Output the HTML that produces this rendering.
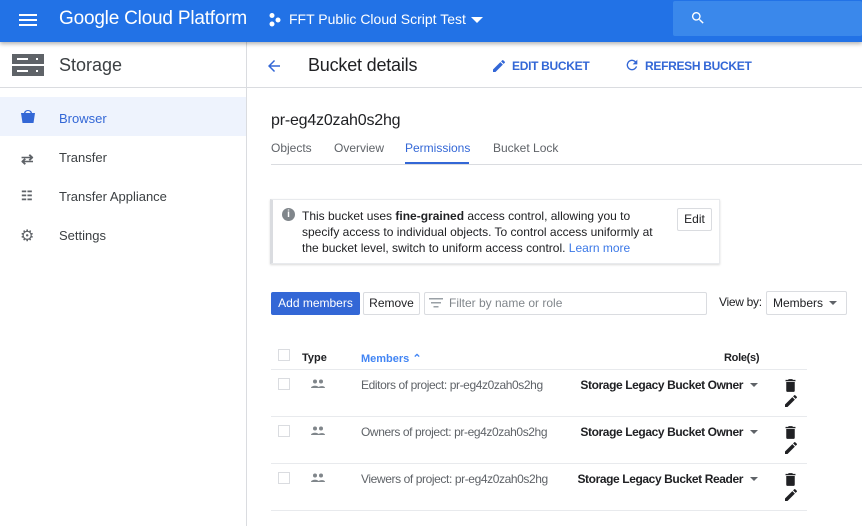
<!DOCTYPE html>
<html><head><meta charset="utf-8"><style>
*{margin:0;padding:0;box-sizing:border-box}
body{width:862px;height:526px;overflow:hidden;background:#fff;font-family:"Liberation Sans",sans-serif;position:relative;color:#202124}
.a{position:absolute;white-space:nowrap}
.t13{font-size:13px}
.r{letter-spacing:-0.4px}
</style></head><body>
<div class="a" style="left:0;top:0;width:862px;height:42px;background:#2272e6;box-shadow:0 2px 4px rgba(0,0,0,.3);z-index:2">
  <div class="a" style="left:19px;top:14px;width:18px;height:2px;background:#fff;box-shadow:0 5px 0 #fff,0 10px 0 #fff"></div>
  <div class="a" style="left:59px;top:8px;font-size:19px;color:#fff;letter-spacing:-0.2px">Google Cloud Platform</div>
  <svg class="a" style="left:268px;top:12px" width="16" height="16" viewBox="0 0 16 16"><circle cx="4" cy="3.5" r="2.5" fill="#fff"/><circle cx="4" cy="12" r="2.5" fill="#fff"/><circle cx="10" cy="8" r="2.5" fill="#fff"/></svg>
  <div class="a" style="left:289px;top:11px;font-size:14px;color:#fff">FFT Public Cloud Script Test</div>
  <div class="a" style="left:471px;top:17px;border-left:6px solid transparent;border-right:6px solid transparent;border-top:6px solid #fff"></div>
  <div class="a" style="left:673px;top:1px;width:189px;height:35px;background:#3a88eb;border-radius:2px"></div>
  <svg class="a" style="left:690px;top:10px" width="16" height="16" viewBox="0 0 24 24"><path fill="#fff" d="M15.5 14h-.8l-.3-.3A6.5 6.5 0 1 0 9.5 16a6.5 6.5 0 0 0 4.2-1.6l.3.3v.8l5 5 1.5-1.5-5-5zm-6 0a4.5 4.5 0 1 1 0-9 4.5 4.5 0 0 1 0 9z"/></svg>
</div>
<div class="a" style="left:246px;top:42px;width:1px;height:484px;background:#dadce0"></div>
<div class="a" style="left:0;top:87px;width:862px;height:1px;background:#dadce0"></div>
<div class="a" style="left:12px;top:54px;width:32px;height:10px;background:#5f6368"></div>
<div class="a" style="left:12px;top:66px;width:32px;height:10px;background:#5f6368"></div>
<div class="a" style="left:17px;top:58px;width:11px;height:2px;background:#fff"></div>
<div class="a" style="left:17px;top:70px;width:11px;height:2px;background:#fff"></div>
<div class="a" style="left:36px;top:58px;width:2px;height:2px;background:#fff"></div>
<div class="a" style="left:36px;top:70px;width:2px;height:2px;background:#fff"></div>
<div class="a" style="left:59px;top:55px;font-size:18px;color:#3c4043">Storage</div>
<div class="a" style="left:0;top:97px;width:246px;height:39px;background:#eef3fd"></div>
<svg class="a" style="left:20px;top:110px" width="16" height="14" viewBox="0 0 16 14"><path fill="#3367d6" d="M1 3h14l-1.5 10h-11z M4 3a4 3 0 0 1 8 0h-1.5a2.5 2 0 0 0-5 0z"/></svg>
<div class="a t13" style="left:59px;top:111px;color:#3367d6">Browser</div>
<div class="a" style="left:21px;top:150px;font-size:15px;color:#5f6368;font-weight:bold">⇄</div>
<div class="a t13" style="left:59px;top:150px;color:#3c4043">Transfer</div>
<div class="a" style="left:21px;top:188px;font-size:13px;color:#5f6368;font-weight:bold">☷</div>
<div class="a t13" style="left:59px;top:189px;color:#3c4043">Transfer Appliance</div>
<div class="a" style="left:20px;top:226px;font-size:16px;color:#5f6368">⚙</div>
<div class="a t13" style="left:59px;top:228px;color:#3c4043">Settings</div>
<svg class="a" style="left:265px;top:57px" width="18" height="18" viewBox="0 0 24 24"><path fill="#3367d6" d="M20 11H7.8l5.6-5.6L12 4l-8 8 8 8 1.4-1.4L7.8 13H20z"/></svg>
<div class="a" style="left:308px;top:55px;font-size:18px;color:#202124;letter-spacing:-0.2px">Bucket details</div>
<svg class="a" style="left:491px;top:58px" width="16" height="16" viewBox="0 0 24 24"><path fill="#3367d6" d="M3 17.25V21h3.75L17.8 9.94l-3.75-3.75zM20.7 7.04a1 1 0 0 0 0-1.41l-2.34-2.34a1 1 0 0 0-1.41 0l-1.83 1.83 3.75 3.75z"/></svg>
<div class="a" style="left:512px;top:59px;font-size:12px;font-weight:bold;color:#3367d6;letter-spacing:-0.3px">EDIT BUCKET</div>
<svg class="a" style="left:624px;top:57px" width="16" height="16" viewBox="0 0 24 24"><path fill="#3367d6" d="M17.65 6.35A8 8 0 1 0 19.73 14h-2.08A6 6 0 1 1 12 6c1.66 0 3.14.69 4.22 1.78L13 11h7V4z"/></svg>
<div class="a" style="left:645px;top:59px;font-size:12px;font-weight:bold;color:#3367d6;letter-spacing:-0.3px">REFRESH BUCKET</div>
<div class="a" style="left:271px;top:112px;font-size:16px;color:#202124;letter-spacing:-0.2px">pr-eg4z0zah0s2hg</div>
<div class="a" style="left:271px;top:164px;width:591px;height:1px;background:#dadce0"></div>
<div class="a" style="left:271px;top:141px;font-size:12px;color:#5f6368">Objects</div>
<div class="a" style="left:334px;top:141px;font-size:12px;color:#5f6368">Overview</div>
<div class="a" style="left:405px;top:141px;font-size:12px;color:#3367d6">Permissions</div>
<div class="a" style="left:405px;top:162px;width:64px;height:2px;background:#3367d6"></div>
<div class="a" style="left:493px;top:141px;font-size:12px;color:#5f6368">Bucket Lock</div>
<div class="a" style="left:270px;top:199px;width:450px;height:65px;border:1px solid #e8eaed;border-left:3px solid #dadce0;box-shadow:0 1px 2px rgba(0,0,0,.15);background:#fff"></div>
<div class="a" style="left:282px;top:208px;width:13px;height:13px;border-radius:50%;background:#80868b;color:#fff;font-size:10px;font-weight:bold;text-align:center;line-height:13px">i</div>
<div class="a" style="left:302px;top:208px;font-size:12px;line-height:16px;color:#202124">This bucket uses <b>fine-grained</b> access control, allowing you to<br>specify access to individual objects. To control access uniformly at<br>the bucket level, switch to uniform access control. <span style="color:#3b78e7">Learn more</span></div>
<div class="a" style="left:677px;top:208px;width:35px;height:23px;border:1px solid #dadce0;border-radius:2px;font-size:12px;text-align:center;line-height:21px">Edit</div>
<div class="a" style="left:271px;top:292px;width:89px;height:23px;background:#3367d6;border-radius:2px;color:#fff;font-size:12px;text-align:center;line-height:23px">Add members</div>
<div class="a" style="left:363px;top:292px;width:57px;height:23px;border:1px solid #dadce0;border-radius:2px;font-size:12px;text-align:center;line-height:21px">Remove</div>
<div class="a" style="left:424px;top:292px;width:283px;height:23px;border:1px solid #dadce0;border-radius:2px"></div>
<svg class="a" style="left:429px;top:297px" width="14" height="12" viewBox="0 0 14 12"><path fill="#9aa0a6" d="M0 1h14v1.5H0zM2 5h10v1.5H2zM4.5 9h5v1.5h-5z"/></svg>
<div class="a" style="left:449px;top:296px;font-size:12px;color:#80868b">Filter by name or role</div>
<div class="a" style="left:719px;top:295px;font-size:12px;color:#202124;letter-spacing:-0.3px">View by:</div>
<div class="a" style="left:766px;top:291px;width:81px;height:24px;border:1px solid #dadce0;border-radius:2px"></div>
<div class="a" style="left:773px;top:296px;font-size:12px">Members</div>
<div class="a" style="left:829px;top:301px;border-left:4px solid transparent;border-right:4px solid transparent;border-top:4px solid #5f6368"></div>
<div class="a" style="left:278px;top:349px;width:12px;height:12px;border:1px solid #dadce0"></div>
<div class="a" style="left:302px;top:352px;font-size:11px;font-weight:bold">Type</div>
<div class="a" style="left:361px;top:352px;font-size:11px;font-weight:bold;color:#4285f4">Members ⌃</div>
<div class="a" style="left:724px;top:352px;font-size:11px;font-weight:bold;letter-spacing:-0.3px">Role(s)</div>
<div class="a" style="left:271px;top:369px;width:536px;height:1px;background:#e8eaed"></div>
<div class="a" style="left:271px;top:416px;width:536px;height:1px;background:#e8eaed"></div>
<div class="a" style="left:271px;top:463px;width:536px;height:1px;background:#e8eaed"></div>
<div class="a" style="left:271px;top:510px;width:536px;height:1px;background:#e8eaed"></div>
<div class="a" style="left:278px;top:378px;width:12px;height:12px;border:1px solid #dadce0"></div>
<div class="a" style="left:278px;top:425px;width:12px;height:12px;border:1px solid #dadce0"></div>
<div class="a" style="left:278px;top:472px;width:12px;height:12px;border:1px solid #dadce0"></div>
<svg class="a" style="left:311px;top:379px" width="14" height="10" viewBox="0 0 14 10"><circle cx="4" cy="2.5" r="2" fill="#80868b"/><circle cx="10" cy="2.5" r="2" fill="#80868b"/><path fill="#80868b" d="M0 9c0-3 8-3 8 0zM7 9c0-2 7-3 7 0z"/></svg>
<svg class="a" style="left:311px;top:426px" width="14" height="10" viewBox="0 0 14 10"><circle cx="4" cy="2.5" r="2" fill="#80868b"/><circle cx="10" cy="2.5" r="2" fill="#80868b"/><path fill="#80868b" d="M0 9c0-3 8-3 8 0zM7 9c0-2 7-3 7 0z"/></svg>
<svg class="a" style="left:311px;top:473px" width="14" height="10" viewBox="0 0 14 10"><circle cx="4" cy="2.5" r="2" fill="#80868b"/><circle cx="10" cy="2.5" r="2" fill="#80868b"/><path fill="#80868b" d="M0 9c0-3 8-3 8 0zM7 9c0-2 7-3 7 0z"/></svg>
<div class="a r" style="left:361px;top:378px;font-size:12px;color:#5f6368">Editors of project: pr-eg4z0zah0s2hg</div>
<div class="a r" style="left:361px;top:425px;font-size:12px;color:#5f6368">Owners of project: pr-eg4z0zah0s2hg</div>
<div class="a r" style="left:361px;top:472px;font-size:12px;color:#5f6368">Viewers of project: pr-eg4z0zah0s2hg</div>
<div class="a r" style="right:119px;top:378px;font-size:12px;font-weight:bold">Storage Legacy Bucket Owner</div>
<div class="a r" style="right:119px;top:425px;font-size:12px;font-weight:bold">Storage Legacy Bucket Owner</div>
<div class="a r" style="right:119px;top:472px;font-size:12px;font-weight:bold">Storage Legacy Bucket Reader</div>
<div class="a" style="left:750px;top:383px;border-left:4px solid transparent;border-right:4px solid transparent;border-top:4px solid #5f6368"></div>
<div class="a" style="left:750px;top:430px;border-left:4px solid transparent;border-right:4px solid transparent;border-top:4px solid #5f6368"></div>
<div class="a" style="left:750px;top:477px;border-left:4px solid transparent;border-right:4px solid transparent;border-top:4px solid #5f6368"></div>
<svg class="a" style="left:782px;top:377px" width="17" height="17" viewBox="0 0 24 24"><path fill="#202124" d="M6 19a2 2 0 0 0 2 2h8a2 2 0 0 0 2-2V7H6zM19 4h-3.5l-1-1h-5l-1 1H5v2h14z"/></svg>
<svg class="a" style="left:783px;top:393px" width="16" height="16" viewBox="0 0 24 24"><path fill="#202124" d="M3 17.25V21h3.75L17.8 9.94l-3.75-3.75zM20.7 7.04a1 1 0 0 0 0-1.41l-2.34-2.34a1 1 0 0 0-1.41 0l-1.83 1.83 3.75 3.75z"/></svg>
<svg class="a" style="left:782px;top:424px" width="17" height="17" viewBox="0 0 24 24"><path fill="#202124" d="M6 19a2 2 0 0 0 2 2h8a2 2 0 0 0 2-2V7H6zM19 4h-3.5l-1-1h-5l-1 1H5v2h14z"/></svg>
<svg class="a" style="left:783px;top:440px" width="16" height="16" viewBox="0 0 24 24"><path fill="#202124" d="M3 17.25V21h3.75L17.8 9.94l-3.75-3.75zM20.7 7.04a1 1 0 0 0 0-1.41l-2.34-2.34a1 1 0 0 0-1.41 0l-1.83 1.83 3.75 3.75z"/></svg>
<svg class="a" style="left:782px;top:471px" width="17" height="17" viewBox="0 0 24 24"><path fill="#202124" d="M6 19a2 2 0 0 0 2 2h8a2 2 0 0 0 2-2V7H6zM19 4h-3.5l-1-1h-5l-1 1H5v2h14z"/></svg>
<svg class="a" style="left:783px;top:487px" width="16" height="16" viewBox="0 0 24 24"><path fill="#202124" d="M3 17.25V21h3.75L17.8 9.94l-3.75-3.75zM20.7 7.04a1 1 0 0 0 0-1.41l-2.34-2.34a1 1 0 0 0-1.41 0l-1.83 1.83 3.75 3.75z"/></svg>
</body></html>
